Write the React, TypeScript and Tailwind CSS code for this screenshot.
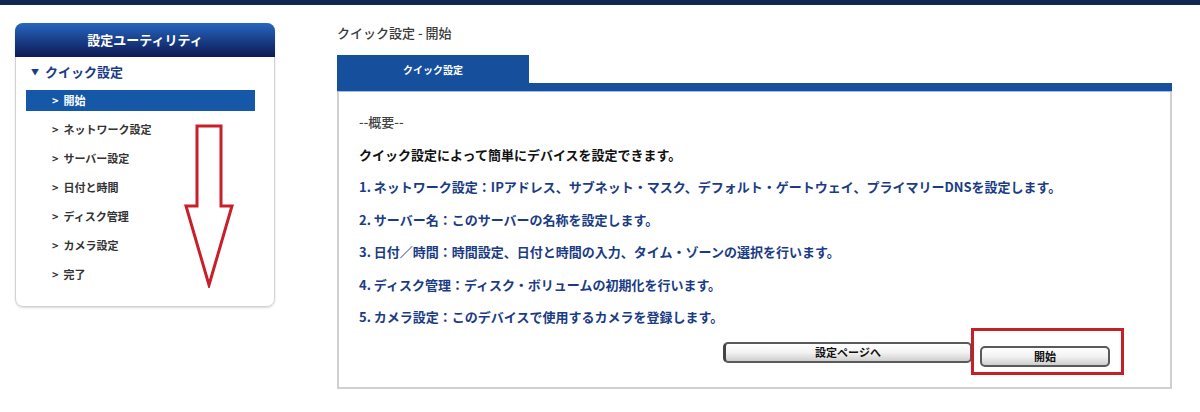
const menuItems = [
  "開始",
  "ネットワーク設定",
  "サーバー設定",
  "日付と時間",
  "ディスク管理",
  "カメラ設定",
  "完了",
];

const steps = [
  "1. ネットワーク設定：IPアドレス、サブネット・マスク、デフォルト・ゲートウェイ、プライマリーDNSを設定します。",
  "2. サーバー名：このサーバーの名称を設定します。",
  "3. 日付／時間：時間設定、日付と時間の入力、タイム・ゾーンの選択を行います。",
  "4. ディスク管理：ディスク・ボリュームの初期化を行います。",
  "5. カメラ設定：このデバイスで使用するカメラを登録します。",
];

function DownArrow() {
  return (
    <svg width="50" height="164" viewBox="0 0 50 164" className="absolute left-[184px] top-[124px]">
      <path
        d="M13 2 H37 V82 H48 L25 161 L2 82 H13 Z"
        fill="none"
        stroke="#c8202a"
        strokeWidth="3"
        strokeLinejoin="miter"
      />
    </svg>
  );
}

export default function App() {
  return (
    <div className="relative w-[1200px] h-[412px] bg-white overflow-hidden font-['Noto_Sans_CJK_JP','Noto_Sans',sans-serif]">
      <div className="h-[5px] bg-[#0f2850]" />

      <div className="flex">
        {/* Sidebar */}
        <aside className="ml-[15px] mt-[18px] w-[260px] h-[284px] rounded-[8px] border border-[#d2d2d2] shadow-[0_1px_2px_rgba(0,0,0,0.15)] flex flex-col">
          <div className="h-[34px] -mx-px -mt-px rounded-t-[8px] bg-gradient-to-b from-[#2767c0] to-[#0d1a55] flex items-center justify-center text-white text-[13px] font-bold">
            設定ユーティリティ
          </div>
          <div className="h-[29px] flex items-center pl-[15px] gap-[6px] text-[#1b3c84] font-bold text-[13px]">
            <span className="text-[8px]">▼</span>
            <span>クイック設定</span>
          </div>
          <ul className="flex flex-col">
            {menuItems.map((item, i) => (
              <li key={item} className="h-[29px] flex items-center">
                <div
                  className={
                    i === 0
                      ? "ml-[10px] w-[229px] h-[21px] bg-[#1558a8] text-white flex items-center pl-[26px] text-[11px] font-bold"
                      : "ml-[10px] w-[229px] h-[21px] text-[#333] flex items-center pl-[26px] text-[11px] font-bold"
                  }
                >
                  &gt;&nbsp;&nbsp;{item}
                </div>
              </li>
            ))}
          </ul>
        </aside>

        {/* Main */}
        <main className="ml-[62px] w-[835px] pt-[20px]">
          <h1 className="h-[16px] leading-[16px] text-[13px] text-[#3a3a3a] font-medium mb-[14px]">
            クイック設定 - 開始
          </h1>

          <div className="w-[192px] h-[28px] bg-[#164f9c] flex items-center justify-center text-white text-[10px] font-bold">
            クイック設定
          </div>
          <div className="h-[8px] bg-[#164f9c]" />
          <div className="h-px bg-[#9dbde6]" />

          <div className="border-x-2 border-b-2 border-[#d0d0d0] pl-[20px] pt-[14px] pb-[20px]">
            <p className="leading-[32.5px] text-[13px] font-medium text-[#444]">--概要--</p>
            <p className="leading-[32.5px] text-[13px] font-bold text-[#111]">
              クイック設定によって簡単にデバイスを設定できます。
            </p>
            {steps.map((s) => (
              <p key={s} className="leading-[32.5px] text-[13px] font-bold text-[#1b3c84]">
                {s}
              </p>
            ))}

            <div className="mt-[8.5px] flex justify-end gap-[8px] pr-[60px]">
              <button className="w-[249px] h-[21px] rounded-[5px] border-2 border-[#5a5a5a] border-l-[3px] border-l-[#444] bg-gradient-to-b from-white via-[#f2f2f2] to-[#cfcfcf] text-[11px] font-bold text-[#111]">
                設定ページへ
              </button>
              <div className="relative">
                <button className="w-[130px] h-[21px] rounded-[5px] border-2 border-[#5a5a5a] bg-gradient-to-b from-white via-[#f2f2f2] to-[#cfcfcf] text-[11px] font-bold text-[#111]">
                  開始
                </button>
                <div className="absolute left-[-9px] top-[-14px] w-[153px] h-[47px] border-[3px] border-[#c62026]" />
              </div>
            </div>
          </div>
        </main>
      </div>

      <DownArrow />
    </div>
  );
}
